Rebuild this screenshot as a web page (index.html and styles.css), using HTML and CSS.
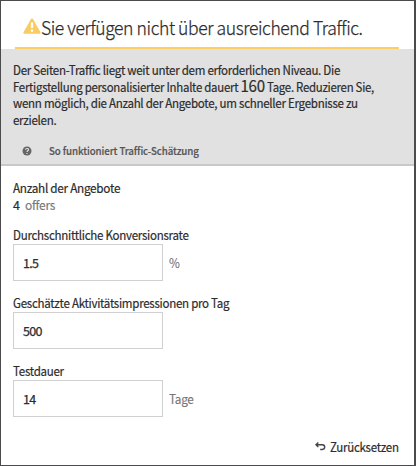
FILE: index.html
```html
<!DOCTYPE html>
<html lang="de">
<head>
<meta charset="utf-8">
<title>Traffic-Schätzung</title>
<link rel="stylesheet" href="styles.css">
</head>
<body>
<main class="panel">
  <header class="title">
    <svg class="warning" viewBox="0 0 18 16"><path d="M8 .9Q9 -.5 10 .9L17.5 14.3Q18 15.7 16.7 15.7H1.3Q0 15.7.5 14.3Z" fill="#f8cc64"/><path d="M9 4.5V10M9 11.5v2.2" stroke="#fff" stroke-width="2.2"/></svg>
    <h1>Sie verfügen nicht über ausreichend Traffic.</h1>
  </header>
  <section class="notice">
    <div class="message">
      <div class="line">Der Seiten-Traffic liegt weit unter dem erforderlichen Niveau. Die</div>
      <div class="line tight">Fertigstellung personalisierter Inhalte dauert <span class="days">160</span> Tage. Reduzieren Sie,</div>
      <div class="line">wenn möglich, die Anzahl der Angebote, um schneller Ergebnisse zu</div>
      <div class="line">erzielen.</div>
    </div>
    <div class="help">
      <svg class="question" viewBox="0 0 10 10"><circle cx="5" cy="5" r="4.5" fill="#666"/><path d="M3.5 3.8C3.6 2 6.6 2 6.5 3.8C6.4 4.7 5 4.8 5 6M5 7v1.1" fill="none" stroke="#e1e1e1" stroke-width="1.1"/></svg>
      <span class="help-text">So funktioniert Traffic-Schätzung</span>
    </div>
  </section>
  <form class="form">
    <div class="label wide">Anzahl der Angebote</div>
    <div class="offers">4 <span class="unit">offers</span></div>
    <label class="label" for="rate">Durchschnittliche Konversionsrate</label>
    <div class="field"><input id="rate" value="1.5"><span class="unit">%</span></div>
    <label class="label next" for="impressions">Geschätzte Aktivitätsimpressionen pro Tag</label>
    <div class="field"><input id="impressions" value="500"></div>
    <label class="label next" for="duration">Testdauer</label>
    <div class="field"><input id="duration" value="14"><span class="unit">Tage</span></div>
  </form>
  <footer class="reset">
    <svg class="undo" viewBox="0 0 11 10"><path d="M1 2.8H7.3Q9.7 2.8 9.7 5T7.3 7.5H5.2M3.3.5L1 2.8L3.3 5.1" fill="none" stroke="#444" stroke-width="1.4"/></svg>
    <span class="reset-text">Zurücksetzen</span>
  </footer>
</main>
</body>
</html>
```

FILE: styles.css
```css
* { box-sizing: border-box; }
body { margin: 0; font: 12.5px/17px "Noto Sans CJK SC", "Open Sans", sans-serif; color: #2c2c2c; background: #fff; -webkit-text-stroke: .2px; }
.panel { width: 416px; height: 466px; border: 1px solid #4b4b4d; border-right-width: 2px; background: #fff; overflow: hidden; display: flex; flex-direction: column; }
.title { flex: none; height: 48px; margin: 0 15px 0 14px; border-bottom: 2px solid #fbcf63; display: flex; align-items: center; padding: 4px 0 0 8px; }
.warning { width: 18px; height: 16px; flex: none; }
h1 { margin: 0; font-size: 19px; line-height: 25px; font-weight: 300; letter-spacing: -.45px; white-space: nowrap; transform: scaleX(.924); transform-origin: left; -webkit-text-stroke: .25px; }
.notice { flex: none; height: 117px; padding: 13px 0 0 12px; background: #e1e1e1; border-bottom: 2px solid #c8c8c8; }
.message { height: 67px; letter-spacing: -.3px; }
.line { width: max-content; height: 16.7px; line-height: 16.7px; white-space: nowrap; transform: scaleX(.924); transform-origin: left; }
.tight { transform: scaleX(.914); }
.days { font-size: 16.5px; line-height: 1px; }
.help { display: flex; align-items: center; height: 17px; margin-top: 13px; padding-left: 9px; gap: 17px; color: #555; font-size: 10.5px; font-weight: 500; letter-spacing: -.1px; }
.help-text { transform: scaleX(.926); transform-origin: left; }
.question { width: 10px; height: 10px; }
.form { flex: 1; padding: 13px 0 0 12px; letter-spacing: -.3px; }
.label { display: block; width: max-content; height: 17px; line-height: 16px; white-space: nowrap; transform: scaleX(.923); transform-origin: left; }
.wide { line-height: 17px; transform: scaleX(.94); }
.offers { height: 17px; margin-bottom: 14px; }
.offers .unit { margin-left: 3px; transform: scaleX(.96); }
.unit { display: inline-block; color: #777; transform: scaleX(.94); transform-origin: left; -webkit-text-stroke: .15px; }
.field { height: 37px; display: flex; align-items: center; gap: 6px; }
.next { margin-top: 14px; }
.field input { width: 150px; height: 37px; border: 1px solid #d0d0d0; padding: 0 9px; font: inherit; color: inherit; -webkit-text-stroke: .25px; letter-spacing: -.7px; background: #fff; }
.reset { flex: none; height: 17px; margin: 0 16px 10px 0; display: flex; justify-content: flex-end; align-items: center; letter-spacing: -.3px; }
.reset-text { width: 68px; margin-left: 4px; white-space: nowrap; transform: scaleX(.92); transform-origin: left; }
.undo { width: 11px; height: 10px; }
```
